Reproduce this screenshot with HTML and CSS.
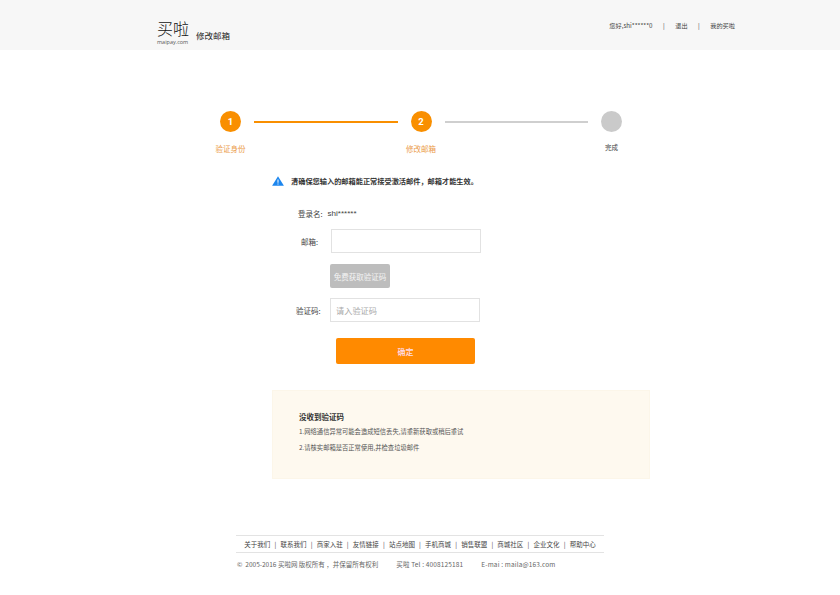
FILE: index.html
```html
<!DOCTYPE html>
<html lang="zh">
<head>
<meta charset="utf-8">
<title>修改邮箱</title>
<link rel="stylesheet" href="styles.css">
</head>
<body>
<header class="top">
  <div class="top-inner">
    <div class="logo"><span class="logo-cn">买啦</span><span class="logo-en">maipay.com</span></div>
    <div class="page-name">修改邮箱</div>
    <nav class="user-nav"><span>您好,shi******0</span><i>|</i><span>退出</span><i>|</i><span>我的买啦</span></nav>
  </div>
</header>
<main>
  <div class="steps">
    <div class="step done"><div class="dot">1</div><div class="step-label">验证身份</div></div>
    <div class="link active"></div>
    <div class="step done"><div class="dot">2</div><div class="step-label">修改邮箱</div></div>
    <div class="link"></div>
    <div class="step todo"><div class="dot"></div><div class="step-label">完成</div></div>
  </div>
  <div class="panel">
    <div class="alert">
      <svg class="alert-icon" viewBox="0 0 12 10" width="12" height="10"><path d="M6 .3 11.9 9.7H.1Z" fill="#1c86ee"/><path d="M5.5 3.4h1v3.4h-1zM5.5 7.4h1v1h-1z" fill="#fff"/></svg>
      <span>清确保您输入的邮箱能正常接受激活邮件，邮箱才能生效。</span>
    </div>
    <div class="row row-name"><span>登录名:</span><span class="name-value">shi******</span></div>
    <div class="row row-mail"><label>邮箱:</label><div class="field field-mail"></div></div>
    <button class="send-btn">免费获取验证码</button>
    <div class="row row-code"><label>验证码:</label><div class="field field-code">请入验证码</div></div>
    <button class="ok-btn">确定</button>
    <section class="notice">
      <h3>没收到验证码</h3>
      <p>1.网络通信异常可能会造成短信丢失,请重新获取或稍后重试</p>
      <p>2.请核实邮箱是否正常使用,并检查垃圾邮件</p>
    </section>
  </div>
</main>
<footer class="foot">
  <div class="foot-links"><span>关于我们</span><i>|</i><span>联系我们</span><i>|</i><span>商家入驻</span><i>|</i><span>友情链接</span><i>|</i><span>站点地图</span><i>|</i><span>手机商城</span><i>|</i><span>销售联盟</span><i>|</i><span>商城社区</span><i>|</i><span>企业文化</span><i>|</i><span>帮助中心</span></div>
  <div class="foot-copy"><span>©&nbsp; 2005-2016 买啦网 版权所有 ，并保留所有权利</span><span class="tel">买啦 Tel : 4008125181</span><span class="mail">E-mai : maila@163.com</span></div>
</footer>
</body>
</html>
```
FILE: styles.css
```css
* { box-sizing: border-box; }
html, body { margin: 0; padding: 0; }
body {
  width: 840px;
  height: 595px;
  overflow: hidden;
  background: #fff;
  color: #333;
  font-family: "Noto Sans CJK SC", "Noto Sans", sans-serif;
  font-size: 7.5px;
}
i { font-style: normal; }

.top { height: 50px; background: #f7f7f7; }
.top-inner { display: flex; align-items: flex-start; padding: 0 105px 0 157px; height: 50px; }
.logo { display: flex; flex-direction: column; width: 39px; padding-top: 17px; }
.logo-cn { font-size: 16px; line-height: 22px; font-weight: 300; color: #111; white-space: nowrap; }
.logo-en { font-family: "Open Sans", sans-serif; font-size: 5.5px; line-height: 6px; color: #555; white-space: nowrap; }
.page-name { margin-top: 29px; font-size: 8.5px; line-height: 13px; font-weight: 400; color: #222; }
.user-nav { margin-left: auto; margin-top: 20px; display: flex; gap: 10.5px; font-size: 6.2px; line-height: 12px; color: #444; }

.steps { display: flex; align-items: flex-start; margin: 61px 0 0 220px; width: 402px; }
.step { width: 21px; display: flex; flex-direction: column; align-items: center; flex: none; }
.dot { width: 21px; height: 21px; border-radius: 50%; color: #fff; font-family: "Roboto", sans-serif; font-weight: 700; font-size: 9.5px; line-height: 21px; text-align: center; }
.done .dot { background: #f98f00; }
.todo .dot { background: #cacaca; }
.step-label { white-space: nowrap; margin-top: 10px; font-size: 7.5px; line-height: 14px; }
.done .step-label { color: #eb9c4a; }
.todo .step-label { margin-top: 8px; font-size: 6.5px; color: #444; }
.link { flex: 1; height: 2px; margin: 9.5px 13px 0; background: #cfcfcf; }
.link.active { background: #f98f00; }

.panel { margin: 19px 0 0 272px; width: 378px; }
.alert { display: flex; align-items: center; height: 12px; gap: 7px; font-size: 7.2px; font-weight: 700; color: #333; white-space: nowrap; }
.alert-icon { flex: none; }

.row { display: flex; align-items: center; color: #444; }
.row-name { margin: 20px 0 0 26px; height: 12px; }
.name-value { margin-left: 5px; font-family: "Liberation Sans", sans-serif; font-size: 8px; }
.row-mail { margin: 10px 0 0 29px; }
.row-mail label { width: 30px; }
.row-code { margin: 10px 0 0 24px; }
.row-code label { width: 34px; }
.field { width: 150px; height: 24px; background: #fff; border: 1px solid #e2e2e2; }
.field-code { padding-left: 5px; font-size: 8.2px; line-height: 22px; color: #aaa; }

.send-btn {
  display: block; width: 60px; height: 24px; margin: 11px 0 0 58px; padding: 0;
  border: 0; border-radius: 2px; background: #bdbdbd; color: #f4f4f4;
  font-family: inherit; font-size: 7.5px; white-space: nowrap;
}
.ok-btn {
  display: block; width: 139px; height: 26px; margin: 16px 0 0 64px; padding: 0;
  border: 0; border-radius: 2px; background: #ff8a00; color: #fde;
  font-family: inherit; font-size: 8px; font-weight: 500;
}
.notice { height: 89px; margin-top: 26px; padding: 20px 26px 0; background: #fef9ef; border: 1px solid #fcf6e9; }
.notice h3 { margin: 0; font-size: 7.5px; line-height: 12px; font-weight: 700; color: #333; }
.notice p { margin: 3px 0 0; font-size: 6.3px; line-height: 12px; color: #555; }
.notice p + p { margin-top: 4px; }

.foot { margin: 56px 0 0 236px; width: 368px; }
.foot-links { display: flex; justify-content: center; gap: 4.2px; height: 18px; line-height: 17px; border-top: 1px solid #e3e3e3; border-bottom: 1px solid #e3e3e3; font-size: 6.5px; color: #444; white-space: nowrap; }
.foot-copy { display: flex; padding-left: 1px; margin-top: 5px; font-size: 6.5px; line-height: 12px; color: #666; white-space: nowrap; }
.tel { margin-left: 18px; letter-spacing: .15px; }
.mail { margin-left: 18px; letter-spacing: .15px; }
```
